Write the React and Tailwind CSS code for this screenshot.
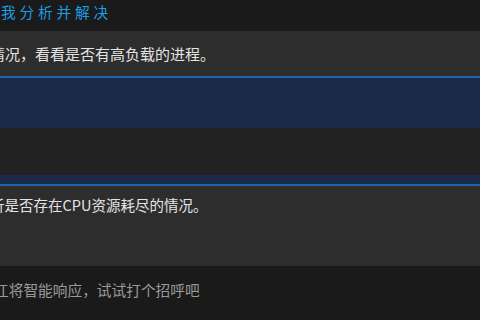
import React from "react";

const font = { fontFamily: '"Noto Sans CJK SC", "Noto Sans", sans-serif' };

export default function App() {
    return <div className="w-[480px] h-[320px] overflow-hidden flex flex-col bg-[#1a1a1a]" style={font}>
        {/* tail of previous message */}
        <div className="h-[31px] shrink-0 bg-[#1a1a1a] flex items-start pt-[2px] pl-[1px]">
            <span className="text-[14.7px] leading-[20px] tracking-[3.8px] text-[#1d9ce3] whitespace-nowrap">我分析并解决</span>
        </div>

        {/* assistant reply */}
        <div className="h-[45px] shrink-0 bg-[#2d2d2d] flex items-center">
            <p className="ml-[-10px] text-[15px] leading-[20px] text-[#e4e4e4] whitespace-nowrap">情况，看看是否有高负载的进程。</p>
        </div>

        {/* selected block */}
        <div className="h-[2px] shrink-0 bg-[#2162b0]"></div>
        <div className="h-[50px] shrink-0 bg-[#1b2a48]"></div>
        <div className="h-[47px] shrink-0 bg-[#222222]"></div>
        <div className="h-[9px] shrink-0 bg-[#1b2a48]"></div>
        <div className="h-[2px] shrink-0 bg-[#2162b0]"></div>

        {/* second reply */}
        <div className="h-[80px] shrink-0 bg-[#2d2d2d] pt-[9px]">
            <p className="ml-[-10px] text-[14.5px] leading-[20px] text-[#e4e4e4] whitespace-nowrap">析是否存在CPU资源耗尽的情况。</p>
        </div>

        {/* input placeholder */}
        <div className="flex-1 bg-[#1a1a1a] flex items-start pt-[14px]">
            <p className="ml-[-6px] text-[14.7px] leading-[20px] text-[#9a9a9a] whitespace-nowrap">江将智能响应，试试打个招呼吧</p>
        </div>
    </div>
}
